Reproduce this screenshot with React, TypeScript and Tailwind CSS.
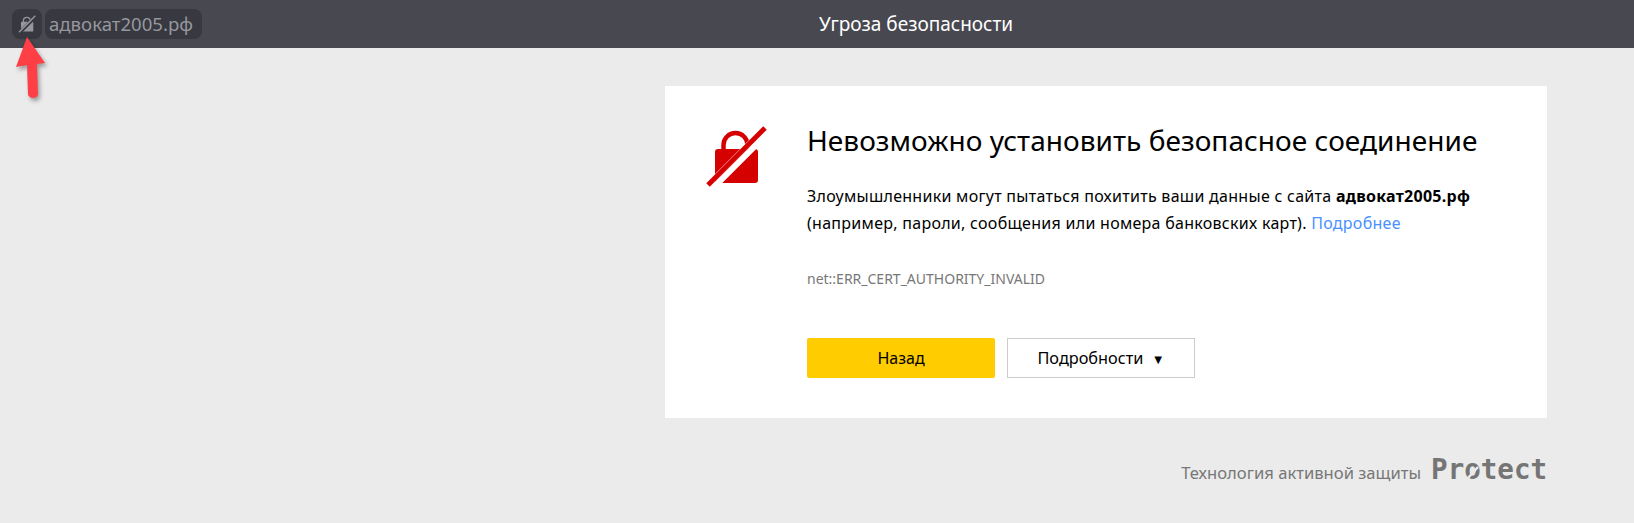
import React from "react";

function SlashedLock({ className, fill, gap }: { className?: string; fill: string; gap: string }) {
  return (
    <svg viewBox="0 0 62 63" className={className}>
      <path d="M18.500 26V20a12 12 0 0 1 24 0v6" fill="none" stroke={fill} strokeWidth="4.500" />
      <rect x="10" y="24" width="43" height="34" rx="3" fill={fill} />
      <path d="M0 71 71 0" stroke={gap} strokeWidth="6" />
      <path d="M60 3 3 60" stroke={gap} strokeWidth="5.500" />
      <path d="M3 60 60 3" stroke={fill} strokeWidth="5" />
    </svg>
  );
}

export default function App() {
  return (
    <div className="relative h-[523px] w-[1634px] overflow-hidden bg-[#ebebeb] font-['Noto_Sans','Open_Sans',sans-serif] text-black">
      <header className="flex h-12 items-center bg-[#484851] pl-3">
        <div className="flex items-center gap-[3px]">
          <div className="flex h-[30px] w-[30px] items-center justify-center rounded-lg bg-[#373840]">
            <SlashedLock className="h-[18px] w-[18px]" fill="#96979c" gap="#373840" />
          </div>
          <div className="flex h-[30px] w-[157px] items-center rounded-lg bg-[#373840] pl-1 text-[18.600px] text-[#96979c]">
            адвокат2005.рф
          </div>
        </div>
        <div className="flex-1 pr-[4px] text-center text-[19px] text-white">Угроза безопасности</div>
      </header>

      <main className="ml-[665px] mt-[38px] w-[882px]">
        <section className="flex h-[332px] bg-white pl-[40px] pt-[39px]">
          <SlashedLock className="h-[63px] w-[62px]" fill="#d50000" gap="#ffffff" />
          <div className="ml-[40px]">
            <h1 className="text-[28px] leading-[30px] tracking-[0.05px]">Невозможно установить безопасное соединение</h1>
            <p className="mt-[28px] text-[16px] leading-[27px] tracking-[0.28px]">
              Злоумышленники могут пытаться похитить ваши данные с сайта <b>адвокат2005.рф</b>
              <br />
              (например, пароли, сообщения или номера банковских карт).{" "}
              <a className="text-[#4a90ff]">Подробнее</a>
            </p>
            <p className="mt-[33px] text-[14px] leading-[18px] text-[#777]">net::ERR_CERT_AUTHORITY_INVALID</p>
            <div className="mt-[50px] flex gap-[12px]">
              <button className="h-10 w-[188px] rounded-[2px] bg-[#ffcc00] text-[16px]">Назад</button>
              <button className="h-10 w-[188px] border border-[#cccccc] bg-white text-[16.300px]">
                Подробности <span className="ml-1 text-[13px]">▼</span>
              </button>
            </div>
          </div>
        </section>

        <footer className="mt-[35px] flex items-center justify-end gap-[10px] text-[#777]">
          <span className="pt-[8px] text-[16.600px]">Технология активной защиты</span>
          <span className="relative font-['DejaVu_Sans_Mono'] text-[27.500px] leading-[26px] font-bold text-[#757575]">
            Protect
            <svg viewBox="0 0 16 16" className="absolute left-[34px] top-[8px] h-4 w-4">
              <path d="M3 14 13 3" stroke="#ebebeb" strokeWidth="2.500" />
            </svg>
          </span>
        </footer>
      </main>

      <svg viewBox="0 0 50 70" className="absolute left-[10px] top-[34px] h-[70px] w-[50px] drop-shadow-[2px_3px_2px_rgba(0,0,0,0.35)]">
        <path d="M17 3 6 33 17 31 18 60a5 4 0 0 0 10 0L27 30 35 29Z" fill="#ff3f46" />
      </svg>
    </div>
  );
}
